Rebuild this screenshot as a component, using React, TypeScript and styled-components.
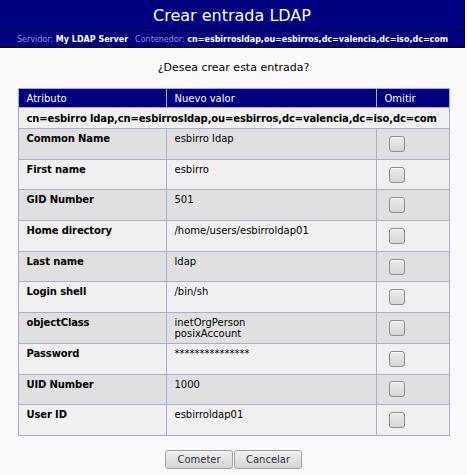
import React from "react";
import styled, { createGlobalStyle } from "styled-components";

const Global = createGlobalStyle`
  html, body { margin: 0; padding: 0; background: #f9f9fb; }
  body { font-family: "DejaVu Sans", Verdana, sans-serif; color: #000; }
`;

const Header = styled.div`
  width: 464px;
  background: #000080;
  border-right: 1px solid #000;
  border-bottom: 1px solid #000;
`;

const Title = styled.div`
  height: 31px;
  line-height: 31px;
  text-align: center;
  color: #fff;
  font-size: 16px;
  border-bottom: 1px solid #000033;
`;

const SubLine = styled.div`
  height: 15px;
  line-height: 15px;
  padding-left: 17px;
  font-size: 8px;
  color: #fff;
  font-weight: bold;
  white-space: nowrap;
`;

const SubLabel = styled.span<{ $gap?: boolean }>`
  color: #9898d8;
  font-weight: normal;
  margin-left: ${(p) => (p.$gap ? "7px" : "0")};
`;

const Question = styled.div`
  text-align: center;
  font-size: 11px;
  margin-top: 13px;
  height: 27px;
`;

const Table = styled.table`
  border-collapse: collapse;
  margin: 0 auto;
  width: 432px;
  table-layout: fixed;
  font-size: 10px;
`;

const Th = styled.th`
  background: #000080;
  color: #fff;
  font-weight: normal;
  text-align: left;
  padding: 0 8px;
  height: 18px;
  border: 1px solid #aaaad4;
`;

const Row = styled.tr<{ $dark?: boolean }>`
  background: ${(p) => (p.$dark ? "#e0e0e0" : "#f0f0f0")};
`;

const DnCell = styled.td`
  font-weight: bold;
  font-size: 10px;
  letter-spacing: -0.13px;
  padding: 0 8px;
  height: 20px;
  border: 1px solid #aaaad4;
  white-space: nowrap;
`;

const Td = styled.td<{ $bold?: boolean }>`
  vertical-align: top;
  padding: 4px 8px 0;
  height: 25.7px;
  border: 1px solid #aaaad4;
  font-weight: ${(p) => (p.$bold ? "bold" : "normal")};
  letter-spacing: ${(p) => (p.$bold ? "-0.13px" : "0")};
  line-height: 11px;
`;

const CheckTd = styled.td`
  vertical-align: middle;
  padding: 0 0 0 12px;
  border: 1px solid #aaaad4;
`;

const Check = styled.span`
  display: block;
  width: 14px;
  height: 14px;
  border: 1px solid #8c8c8c;
  border-radius: 3px;
  background: linear-gradient(#ececec, #d6d6d6);
  box-shadow: inset 0 1px 0 #fafafa;
`;

const Buttons = styled.div`
  display: flex;
  justify-content: center;
  gap: 1px;
  margin-top: 14px;
`;

const Button = styled.button`
  width: 68px;
  height: 19px;
  padding: 0;
  font-family: "DejaVu Sans", Verdana, sans-serif;
  font-size: 10px;
  color: #333344;
  border: 1px solid #a0a0a0;
  border-radius: 3px;
  background: linear-gradient(#f0f0f0, #d4d4d4);
`;

const rows: { label: string; value: string[] }[] = [
  { label: "Common Name", value: ["esbirro ldap"] },
  { label: "First name", value: ["esbirro"] },
  { label: "GID Number", value: ["501"] },
  { label: "Home directory", value: ["/home/users/esbirroldap01"] },
  { label: "Last name", value: ["ldap"] },
  { label: "Login shell", value: ["/bin/sh"] },
  { label: "objectClass", value: ["inetOrgPerson", "posixAccount"] },
  { label: "Password", value: ["***************"] },
  { label: "UID Number", value: ["1000"] },
  { label: "User ID", value: ["esbirroldap01"] },
];

export default function App() {
  return (
    <>
      <Global />
      <Header>
        <Title>Crear entrada LDAP</Title>
        <SubLine>
          <SubLabel>Servidor:</SubLabel> My LDAP Server
          <SubLabel $gap>Contenedor:</SubLabel> cn=esbirrosldap,ou=esbirros,dc=valencia,dc=iso,dc=com
        </SubLine>
      </Header>
      <Question>¿Desea crear esta entrada?</Question>
      <Table>
        <colgroup>
          <col style={{ width: 148 }} />
          <col style={{ width: 210 }} />
          <col style={{ width: 73 }} />
        </colgroup>
        <thead>
          <tr>
            <Th>Atributo</Th>
            <Th>Nuevo valor</Th>
            <Th>Omitir</Th>
          </tr>
        </thead>
        <tbody>
          <Row>
            <DnCell colSpan={3}>
              cn=esbirro ldap,cn=esbirrosldap,ou=esbirros,dc=valencia,dc=iso,dc=com
            </DnCell>
          </Row>
          {rows.map((r, i) => (
            <Row key={r.label} $dark={i % 2 === 0}>
              <Td $bold>{r.label}</Td>
              <Td>
                {r.value.map((v) => (
                  <div key={v}>{v}</div>
                ))}
              </Td>
              <CheckTd>
                <Check />
              </CheckTd>
            </Row>
          ))}
        </tbody>
      </Table>
      <Buttons>
        <Button>Cometer</Button>
        <Button>Cancelar</Button>
      </Buttons>
    </>
  );
}
